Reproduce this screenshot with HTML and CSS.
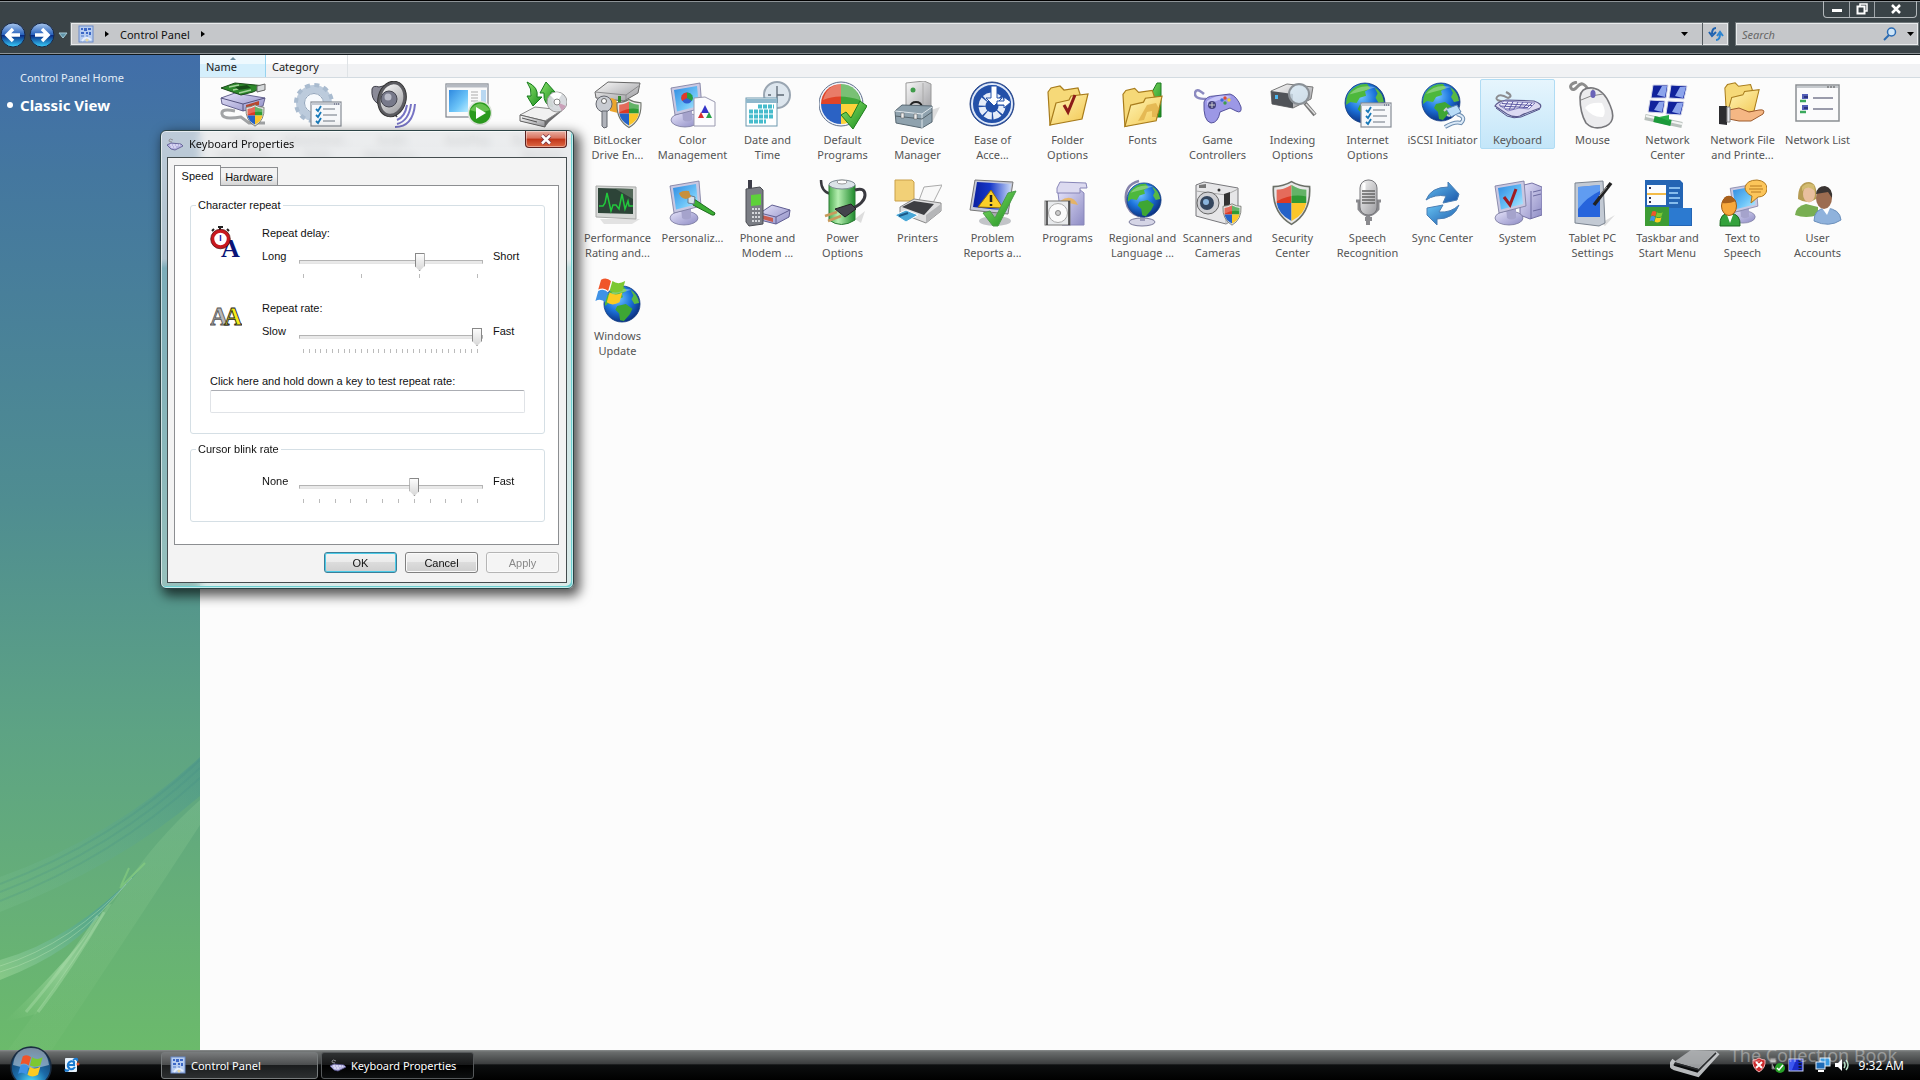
FILE: index.html
```html
<!DOCTYPE html>
<html lang="en">
<head>
<meta charset="utf-8">
<title>Control Panel</title>
<link rel="stylesheet" href="styles.css">
</head>
<body>
<svg class="defs" width="0" height="0" aria-hidden="true">
  <defs>
    <linearGradient id="silver" x1="0" y1="0" x2="1" y2="1"><stop offset="0" stop-color="#fafafa"/><stop offset="1" stop-color="#9a9a9e"/></linearGradient>
    <linearGradient id="screen" x1="0" y1="0" x2="1" y2="1"><stop offset="0" stop-color="#2f8ae0"/><stop offset=".6" stop-color="#6cc4f8"/><stop offset="1" stop-color="#b9ecff"/></linearGradient>
    <linearGradient id="navy" x1="0" y1="0" x2="1" y2="0"><stop offset="0" stop-color="#0a1fa0"/><stop offset=".45" stop-color="#1638c8"/><stop offset="1" stop-color="#c8d8f8"/></linearGradient>
    <linearGradient id="gold" x1="0" y1="0" x2="1" y2="1"><stop offset="0" stop-color="#fff6b8"/><stop offset="1" stop-color="#f2c650"/></linearGradient>
    <linearGradient id="lilac" x1="0" y1="0" x2="1" y2="1"><stop offset="0" stop-color="#e6e4fa"/><stop offset="1" stop-color="#8d8bc4"/></linearGradient>
    <linearGradient id="green" x1="0" y1="0" x2="1" y2="1"><stop offset="0" stop-color="#8be36b"/><stop offset="1" stop-color="#168a1c"/></linearGradient>
    <linearGradient id="sync" x1="0" y1="0" x2="1" y2="1"><stop offset="0" stop-color="#66c2f2"/><stop offset="1" stop-color="#1a55a8"/></linearGradient>
    <linearGradient id="cell" x1="0" y1="0" x2="1" y2="0"><stop offset="0" stop-color="#4fae52"/><stop offset=".35" stop-color="#b5eeb0"/><stop offset="1" stop-color="#1f8a2c"/></linearGradient>
    <radialGradient id="sea" cx=".4" cy=".35" r=".7"><stop offset="0" stop-color="#6fc2ff"/><stop offset=".5" stop-color="#1c74dc"/><stop offset="1" stop-color="#0a2a78"/></radialGradient>
    <radialGradient id="orb" cx=".5" cy=".9" r=".9"><stop offset="0" stop-color="#4fe0ff"/><stop offset=".45" stop-color="#1b6aa8"/><stop offset="1" stop-color="#12304e"/></radialGradient>
    <linearGradient id="nav" x1="0" y1="0" x2="0" y2="1"><stop offset="0" stop-color="#a9c8ee"/><stop offset=".48" stop-color="#2a63bd"/><stop offset=".52" stop-color="#082c86"/><stop offset="1" stop-color="#3ad2ff"/></linearGradient>
  </defs>

  <symbol id="shield" viewBox="0 0 24 28">
    <path d="M12 1Q17 4 23 4Q24 20 12 27Q0 20 1 4Q7 4 12 1Z" fill="#e8e8e8" stroke="#6c7068" stroke-width="1"/>
    <path d="M12 3Q7 6 3 6V14H12Z" fill="#dc3a24"/><path d="M12 3Q17 6 21 6V14H12Z" fill="#2f9a34"/>
    <path d="M3 14H12V25Q4 21 3 14Z" fill="#2462c8"/><path d="M21 14H12V25Q20 21 21 14Z" fill="#fbc62a"/>
    <path d="M3 6Q7 6 12 3Q17 6 21 6V10Q12 8 3 13Z" fill="#fff" opacity=".25"/>
  </symbol>
  <symbol id="globe" viewBox="0 0 40 40">
    <circle cx="20" cy="20" r="19" fill="url(#sea)" stroke="#0f3a80" stroke-width=".8"/>
    <path d="M5 10Q12 1 22 2L25 6L20 9L21 13L15 15L12 20L6 19L2 22Q2 14 5 10Z" fill="#4db83c"/>
    <path d="M15 22L24 20L31 25L28 31L22 38L18 37L17 30L13 26Z" fill="#3ea634"/>
    <path d="M29 5Q37 10 38 19L33 20L30 15L32 11Z" fill="#58b944"/>
    <path d="M5 12Q14 1 30 5Q20 8 5 12Z" fill="#fff" opacity=".3"/>
  </symbol>
  <symbol id="monitor" viewBox="0 0 34 46">
    <ellipse cx="15" cy="38" rx="14" ry="7" fill="url(#lilac)" stroke="#77779c" stroke-width=".8"/>
    <path d="M12 27L22 25L22 38Q17 41 13 38Z" fill="#a5a3cc"/>
    <path d="M1 6L30 1L32 26L5 33Z" fill="#c9c8e2" stroke="#77779c" stroke-width=".8"/>
    <path d="M4 8L27 4L29 24L7 29.500Z" fill="url(#screen)"/>
  </symbol>
  <symbol id="folder" viewBox="0 0 44 42">
    <path d="M2 7L5 3L14 1L18 5L32 3L34 9V30L4 40Z" fill="#f6d978" stroke="#a87c1c" stroke-width="1.200"/>
    <path d="M10 18L23 15L25 11L42 9L36 34L4 40Z" fill="url(#gold)" stroke="#a87c1c" stroke-width="1.200"/>
  </symbol>
  <symbol id="checklist" viewBox="0 0 32 26">
    <rect x="1" y="1" width="30" height="24" fill="#f7f8fa" stroke="#868c94" stroke-width="1.200"/>
    <path d="M1 3H31" stroke="#c3c8d0" stroke-width="2"/><path d="M24 3H29" stroke="#446" stroke-dasharray="1 1"/>
    <path d="M13 8H25M13 14H27M13 20H25" stroke="#6d7480" stroke-width="1.200"/>
    <path d="M6 8L8 10L11 5M6 14L8 16L11 11M6 20L8 22L11 17" fill="none" stroke="#1879b8" stroke-width="1.800"/>
  </symbol>
  <symbol id="keyb" viewBox="0 0 48 30">
    <path d="M13 11Q0 10 3 6T14 7Q20 5 12 1" fill="none" stroke="#8c8c90" stroke-width="2"/>
    <path d="M1 15Q3 11 12 9L40 10Q49 13 46 17L38 20Q32 22 26 25Q20 27 13 23Z" fill="#dcdaf2" stroke="#5c5a8e" stroke-width="1.200"/>
    <path d="M5 14L10 10L41 12L35 18L25 17L14 20Z" fill="#f0effc" stroke="#6f6bb0" stroke-width=".8"/>
    <path d="M8 12.500L38 14.500M6 15L33 16.500M11 18L20 18M14 10.500L10 17M19 10.500L15 19M24 11L20 18M29 11L25 17M34 12L29 17M38 12L33 17" stroke="#5b57a2" stroke-width="1"/>
    <path d="M2 17L13 25Q20 28 27 26L39 21L46 18" fill="none" stroke="#53518a" stroke-width="1"/>
  </symbol>
  <symbol id="keyb-small" viewBox="0 0 16 16">
    <path d="M5 6Q1 6 2 4T6 4" fill="none" stroke="#909096"/>
    <path d="M0 9L4 7L14 8L16 10L12 12L8 14L4 13Z" fill="#b9b6e2" stroke="#55528c" stroke-width=".8"/>
    <path d="M3 9L13 9M4 11L10 11" stroke="#f2f1ff" stroke-dasharray="2 1"/>
  </symbol>
  <symbol id="flag" viewBox="0 0 24 22">
    <path d="M5 3Q9 1 12 4L10 11Q7 8 3 10Z" fill="#f0552a"/><path d="M13 4Q17 7 22 4L20 11Q15 13 11 11Z" fill="#7cc832"/>
    <path d="M3 11Q7 9 10 12L8 19Q5 16 1 18Z" fill="#3f92e6"/><path d="M11 12Q15 15 20 12L18 19Q13 22 9 19Z" fill="#fccb22"/>
  </symbol>
  <symbol id="cpanel" viewBox="0 0 16 18">
    <rect x="1" y="1" width="14" height="16" fill="#b7cdf0" stroke="#6b8ac8"/>
    <path d="M3 3H5V5H3ZM6 3H9V6H6ZM10 3H13V5H10ZM3 7H6V9H3ZM8 7H10V9H8ZM11 7H13V10H11Z" fill="#3c68c6"/><path d="M3 11H6M8 11H10" stroke="#4f78cc"/>
    <path d="M4 16Q8 10 13 15" stroke="#e4eeff" stroke-width="2" fill="none"/><circle cx="9" cy="15" r="1.500" fill="#e7d7a0"/>
  </symbol>

  <symbol id="i-hardware" viewBox="0 0 48 48">
    <path d="M16 30Q2 27 3 33T22 36L30 42H46" fill="none" stroke="#a2a4a6" stroke-width="3"/>
    <path d="M2 17L16 12L46 17L44 25L24 30L3 23Z" fill="url(#lilac)" stroke="#666490"/>
    <path d="M2 17L24 23L46 17M24 23V30" fill="none" stroke="#55537e"/><path d="M27 24L40 20V24L27 28Z" fill="#b8462e"/>
    <path d="M2 7L16 2L46 5L34 11L22 14Z" fill="#2e8a2c" stroke="#1b4a1a"/><path d="M10 6L20 4M14 9L24 7M20 12L32 9" stroke="#a6d49c" stroke-width="1.500"/><path d="M16 6L28 4L32 7L20 9Z" fill="#174c18"/><path d="M38 5L46 3V9L38 11Z" fill="#d5d8da" stroke="#666"/>
    <use href="#shield" x="26" y="23" width="20" height="23"/>
  </symbol>
  <symbol id="i-tools" viewBox="0 0 48 48">
    <circle cx="20" cy="22" r="14" fill="none" stroke="#bccbdc" stroke-width="8"/>
    <circle cx="20" cy="22" r="18" fill="none" stroke="#a9bbcf" stroke-width="4" stroke-dasharray="5 4.400"/>
    <circle cx="20" cy="22" r="9.500" fill="#f7fafd" stroke="#8fa3ba"/>
    <use href="#checklist" x="16" y="20" width="32" height="26"/>
  </symbol>
  <symbol id="i-audio" viewBox="0 0 48 48">
    <path d="M3 8Q4 4 10 6L18 4L28 36L14 26L8 22Q2 18 3 8Z" fill="#8b8b98" stroke="#3d3d48"/>
    <ellipse cx="23" cy="18" rx="14" ry="18" transform="rotate(15 23 18)" fill="#5b5b60" stroke="#333"/>
    <ellipse cx="23" cy="18" rx="11" ry="15" transform="rotate(15 23 18)" fill="url(#silver)"/>
    <circle cx="20" cy="18" r="8" fill="#77798a" stroke="#44454f"/><circle cx="19" cy="16" r="3.500" fill="#b9bbc8"/>
    <path d="M28 39Q36 36 38 24M28 43Q40 40 42 23M26 46Q44 46 46 23" fill="none" stroke="#7673c4" stroke-width="2"/>
  </symbol>
  <symbol id="i-autoplay" viewBox="0 0 48 48">
    <rect x="2" y="3" width="42" height="33" fill="#fafafa" stroke="#7d838c" stroke-width="1.200"/>
    <path d="M2 5H44" stroke="#b5bac2" stroke-width="3"/><rect x="5" y="9" width="19" height="22" fill="url(#screen)"/><path d="M27 11H34M27 14H34M27 17H34M27 20H34" stroke="#aaa"/><rect x="37" y="9" width="5" height="20" fill="#b9d8f2"/>
    <circle cx="36" cy="32" r="11.500" fill="#2b9a1e" stroke="#e0e6de" stroke-width="1.500"/><path d="M26 29Q36 16 46 29Q36 33 26 29Z" fill="#8ddc70" opacity=".6"/><path d="M32 26L42 32L32 38Z" fill="#fff"/>
  </symbol>
  <symbol id="i-backup" viewBox="0 0 48 48">
    <path d="M1 36L16 27L43 30L30 41L26 46L1 40Z" fill="#6e6e70"/><path d="M1 34L16 26L43 29L26 40Z" fill="#f1f1f1" stroke="#888"/><path d="M1 34L26 40V46L1 40Z" fill="url(#silver)" stroke="#666"/><path d="M3 37L18 41" stroke="#555"/>
    <path d="M8 1Q20 6 18 16H23L14 25L8 15H12Q13 8 8 1Z" fill="url(#green)" stroke="#167a1c"/>
    <path d="M27 1L36 11H32Q31 20 34 26Q24 24 25 12L21 12Z" fill="url(#green)" stroke="#167a1c"/>
    <circle cx="38" cy="21" r="10" fill="#d7dade" stroke="#999" opacity=".95"/><path d="M38 21L31 14Q37 9 43 13Z" fill="#fff"/><path d="M38 21L47 25L43 30Z" fill="#c9a0b8"/><circle cx="38" cy="21" r="3" fill="#fff" stroke="#888"/>
  </symbol>
  <symbol id="i-bitlocker" viewBox="0 0 48 48">
    <path d="M1 11L14 1L46 2L44 12L30 20L2 17Z" fill="url(#silver)" stroke="#666"/><path d="M1 11L32 14L46 4M32 14V20" fill="none" stroke="#8a8a8c"/><path d="M24 15H27V21H24Z" fill="#2e8a30"/>
    <path d="M14 17Q24 16 24 26V32L16 30Z" fill="#eba52c"/><circle cx="10" cy="23" r="8" fill="#c9ccd2" stroke="#63666e"/><circle cx="10" cy="20" r="2.500" fill="#fff" stroke="#666"/>
    <path d="M8 30H13V46L10 47L8 45Z" fill="#b0b3ba" stroke="#63666e"/>
    <use href="#shield" x="22" y="17" width="26" height="31"/>
  </symbol>
  <symbol id="i-color" viewBox="0 0 48 48">
    <use href="#monitor" x="1" y="1" width="34" height="46"/>
    <circle cx="18" cy="17" r="5.500" fill="#3160d0"/><path d="M18 17V11.500A5.500 5.500 0 0 1 23 20Z" fill="#28a040"/><path d="M18 17V11.500A5.500 5.500 0 0 0 13 20Z" fill="#e0382a"/>
    <path d="M25 17L36 16L46 21V45H25Z" fill="#fcfcfe" stroke="#9a9ab0"/><path d="M36 24L40 32H32Z" fill="#3434c8"/><path d="M32 31L35 37H29Z" fill="#d83030"/><path d="M40 31L43 37H37Z" fill="#28a048"/>
  </symbol>
  <symbol id="i-date" viewBox="0 0 48 48">
    <circle cx="33" cy="14" r="13" fill="#dde6ee" stroke="#9aa6b2" stroke-width="2"/><path d="M33 5V14H40M33 14V22M24 14H27" stroke="#5c6874" fill="none" stroke-width="1.300"/>
    <rect x="2" y="17" width="31" height="28" fill="#fff" stroke="#6c98ae"/><path d="M2 20H33" stroke="#8fb8cc" stroke-width="4"/>
    <path d="M14 25.500H30M5 30.500H30M5 35.500H30M5 40.500H22" stroke="#46bccc" stroke-width="4" stroke-dasharray="4 1"/>
  </symbol>
  <symbol id="i-default" viewBox="0 0 48 48">
    <circle cx="22" cy="23" r="22" fill="#f0f3f8" stroke="#60708c"/><path d="M22 23V3A20 20 0 0 0 2 23Z" fill="#e04428"/><path d="M22 23V3A20 20 0 0 1 42 23Z" fill="#3fa53a"/><path d="M22 23H2A20 20 0 0 0 22 43Z" fill="#2b62c4"/><path d="M22 23H42A20 20 0 0 1 22 43Z" fill="#fcd23a"/>
    <path d="M4 19Q8 4 22 3Q38 4 41 19Q20 12 4 19Z" fill="#fff" opacity=".3"/>
    <path d="M22 34L27 31L32 37L41 20L48 25L34 48Z" fill="url(#green)" stroke="#1e7d1c"/>
  </symbol>
  <symbol id="i-device" viewBox="0 0 48 48">
    <path d="M34 30L46 26L38 42Z" fill="#ddd"/><path d="M12 2L30 0L37 3V34H12Z" fill="url(#silver)" stroke="#999"/><path d="M29 2V34" stroke="#aaa"/><circle cx="19" cy="9" r="2.500" fill="#3f9c4a"/>
    <path d="M16 26Q17 21 22 21T28 26" fill="none" stroke="#222" stroke-width="2"/><path d="M1 30L8 24L38 25V41L28 47L2 42Z" fill="#8fa2ae" stroke="#586872"/><path d="M1 30L28 33L38 26M28 33V47" fill="none" stroke="#dfe7ec"/><path d="M1 35L28 38L38 31" fill="none" stroke="#56646c"/><path d="M7 32H10V37H7ZM20 33H23V38H20Z" fill="#eee" stroke="#555" stroke-width=".5"/>
  </symbol>
  <symbol id="i-ease" viewBox="0 0 48 48">
    <circle cx="23" cy="23" r="22" fill="#2350a8" stroke="#2b4684"/><circle cx="23" cy="23" r="20" fill="none" stroke="#dfe8f8" stroke-width="2"/>
    <circle cx="23" cy="25" r="10" fill="none" stroke="#e6edf9" stroke-width="7" stroke-dasharray="6.500 1.400"/><path d="M22 5H28V17H33L25 25L17 17H22Z" fill="#fff" stroke="#2350a8"/><path d="M28 20H35V16L42 21L35 27V24H28Z" fill="#fff" stroke="#2350a8"/>
  </symbol>
  <symbol id="i-folderopt" viewBox="0 0 48 48"><use href="#folder" x="2" y="4" width="44" height="42"/><path d="M20 24L24 31L31 14" fill="none" stroke="#8c1c18" stroke-width="3"/></symbol>
  <symbol id="i-fonts" viewBox="0 0 48 48"><path d="M27 22L38 2L42 2V36H28Z" fill="url(#green)" stroke="#1d7a20"/><use href="#folder" x="2" y="6" width="43" height="42"/><path d="M19 40L28 24L37 22L40 28L37 36L33 36V30L28 31L25 39Z" fill="#e0b04a" opacity=".8"/></symbol>
  <symbol id="i-game" viewBox="0 0 48 48">
    <path d="M12 18Q0 18 1 12T10 13" fill="none" stroke="#8c8ac0" stroke-width="2.500"/>
    <path d="M10 21Q12 15 20 15L36 13Q43 15 47 26Q48 33 42 30L36 27L26 31Q24 42 17 42Q9 40 10 21Z" fill="#9c98e6" stroke="#55529c"/>
    <path d="M13 20Q24 12 38 16Q24 18 13 24Z" fill="#d9d7ff" opacity=".7"/><circle cx="18" cy="24" r="4" fill="#45437c"/><path d="M15 24H21M18 21V27" stroke="#ccc"/><circle cx="31" cy="17" r="1.700" fill="#e04a30"/><circle cx="35" cy="19" r="1.700" fill="#f4ce30"/><circle cx="31" cy="22" r="1.700" fill="#3ca048"/><circle cx="28" cy="19" r="1.700" fill="#3a6cd8"/>
  </symbol>
  <symbol id="i-index" viewBox="0 0 48 48">
    <path d="M2 10L18 3L44 6L42 18L24 27L3 23Z" fill="url(#silver)" stroke="#777"/><path d="M2 10L24 13V27L3 23Z" fill="#505358"/><rect x="6" y="14" width="3" height="4" fill="#4db8f0"/>
    <path d="M36 22L46 34" stroke="#777" stroke-width="4"/><path d="M37 23L46 33" stroke="#ddd" stroke-width="1.500"/><circle cx="30" cy="13" r="10" fill="#d8eaf6" fill-opacity=".8" stroke="#8a9096" stroke-width="2"/>
  </symbol>
  <symbol id="i-internet" viewBox="0 0 48 48"><use href="#globe" x="0" y="0" width="42" height="44"/><use href="#checklist" x="16" y="21" width="32" height="26"/></symbol>
  <symbol id="i-iscsi" viewBox="0 0 48 48"><use href="#globe" x="2" y="0" width="40" height="42"/><path d="M38 33Q48 36 42 42Q36 40 26 46" fill="none" stroke="#6c8cae" stroke-width="4"/><path d="M38 33Q48 36 42 42Q36 40 26 46" fill="none" stroke="#dceaf8" stroke-width="2"/><path d="M27 28L38 24L42 31L32 36Z" fill="#b8dcf8" stroke="#5a82b0"/><path d="M25 30L28 27M28 34L31 35" stroke="#ccc" stroke-width="2"/></symbol>
  <symbol id="i-keyboard" viewBox="0 0 48 48"><use href="#keyb" x="0" y="10" width="48" height="30"/></symbol>
  <symbol id="i-mouse" viewBox="0 0 48 48">
    <path d="M20 10Q14 -1 9 5T2 7T8 1" fill="none" stroke="#8d8d8d" stroke-width="3"/>
    <path d="M11 16Q12 6 24 7Q35 9 41 24Q48 40 37 45Q25 50 17 42Q11 32 11 16Z" fill="#ececee" stroke="#77777b" stroke-width="1.600"/>
    <path d="M12 19Q21 14 34 13M24 8V14" stroke="#888" fill="none"/><ellipse cx="24" cy="13" rx="2.600" ry="4" fill="#6a63b8"/><path d="M16 27Q20 21 33 22Q38 31 34 36Q24 37 16 27Z" fill="#fff"/>
  </symbol>
  <symbol id="i-netcenter" viewBox="0 0 48 48">
    <path d="M9 4L24 4L22 17L7 17ZM27 4L43 5L40 18L25 17ZM6 19L21 20L19 32L4 31ZM24 20L40 21L37 34L22 33Z" fill="#10229c" stroke="#d5d8ea"/>
    <path d="M18 5H23L21 16L13 14ZM36 6L42 6L39 17L31 15ZM15 21H20L18 31L10 29ZM33 22H39L36 33L28 31Z" fill="#8ca4ec"/>
    <path d="M1 36L38 44" stroke="#b8c0bc" stroke-width="6"/><path d="M2 35L38 43" stroke="#f4f6f4" stroke-width="2"/><path d="M10 38L27 42" stroke="#1b9a3a" stroke-width="6"/><path d="M15 36L25 34V40Z" fill="#28b048"/>
  </symbol>
  <symbol id="i-netfile" viewBox="0 0 48 48"><use href="#folder" x="1" y="1" width="44" height="36"/><path d="M10 29L20 27L30 31L40 29Q47 28 44 33L32 40L20 40L10 38Z" fill="#f5b784" stroke="#9c5a2c"/><path d="M0 25H8V44L0 43Z" fill="#2c2c30"/><path d="M8 26H11V41H8Z" fill="#e5e5ea" stroke="#888"/></symbol>
  <symbol id="i-netlist" viewBox="0 0 48 48">
    <rect x="2" y="4" width="43" height="36" fill="#fbfbfc" stroke="#8a8e92" stroke-width="1.500"/><path d="M3 6H44" stroke="#c6cace" stroke-width="2"/><path d="M33 6H42" stroke="#555" stroke-dasharray="2 1"/>
    <path d="M19 17H39M19 28H39" stroke="#7b7c90" stroke-width="1.600"/><path d="M8 13H14V18H8ZM8 24H14V29H8Z" fill="#5560b8"/><path d="M6 20H12M6 31H12" stroke="#3aa85c" stroke-width="2.500"/><path d="M10 16H14M10 27H14" stroke="#2c3580" stroke-width="2"/>
  </symbol>
  <symbol id="i-perf" viewBox="0 0 48 48">
    <path d="M6 40H46L38 45H10Z" fill="#e2e2e2"/><path d="M2 7L42 8V40L2 38Z" fill="#d6d8d6" stroke="#a9aaa9"/><path d="M4 9L39 10V35L4 34Z" fill="#2d4438"/><path d="M20 9L39 10V20Z" fill="#6d8070" opacity=".6"/><path d="M5 27H9L11 24L13 14L17 32L19 26H22L25 30L28 15L31 30L34 22L35 27H39" fill="none" stroke="#22c83c" stroke-width="1.500"/>
  </symbol>
  <symbol id="i-personal" viewBox="0 0 48 48"><use href="#monitor" x="0" y="1" width="34" height="46"/><path d="M25 20L46 34Q46 37 43 36L24 26Z" fill="#3cae34" stroke="#1c6c1c"/><path d="M19 16L26 18L25 25L19 24Z" fill="#d8e2ec" stroke="#68788a"/><path d="M10 14Q14 11 20 12L22 18L17 20Q11 19 10 14Z" fill="#c8903c"/></symbol>
  <symbol id="i-phone" viewBox="0 0 48 48">
    <path d="M16 34L28 26L46 31L45 38L32 45L16 41Z" fill="url(#lilac)" stroke="#605e92"/><path d="M16 34L32 38L46 31M32 38V45" stroke="#605e92" fill="none"/><path d="M18 36L29 39V43L18 40Z" fill="#c85c50"/>
    <path d="M4 1H8V12H4Z" fill="#3d3d48"/><path d="M2 10L16 8L19 11V45L5 47L2 43Z" fill="#7a7d84" stroke="#4a4c52"/><path d="M7 16L17 15V26L7 27Z" fill="#5ed03a"/><path d="M8 30H17M8 34H17M8 38H17M8 42H17" stroke="#d5d7db" stroke-width="2" stroke-dasharray="2 1"/>
  </symbol>
  <symbol id="i-power" viewBox="0 0 48 48">
    <path d="M36 40L46 32L42 44Z" fill="#ddd"/><path d="M2 1Q2 13 12 15" fill="none" stroke="#39393f" stroke-width="2.500"/><path d="M10 6V41Q22 50 36 41V6Z" fill="url(#cell)" stroke="#2a7a34"/><ellipse cx="23" cy="5.500" rx="13" ry="4.500" fill="#dbe3e8" stroke="#7b8a92"/><ellipse cx="23" cy="3" rx="5" ry="2" fill="#fff" stroke="#999"/>
    <path d="M32 30Q46 24 46 16T36 11" fill="none" stroke="#39393f" stroke-width="3"/><path d="M16 30L32 25L37 30L26 38Z" fill="#43434c" stroke="#222"/><path d="M18 33L6 37M22 37L9 42" stroke="#c89a5c" stroke-width="2.500"/>
  </symbol>
  <symbol id="i-print" viewBox="0 0 48 48">
    <path d="M1 1H18L20 3V22H1Z" fill="#f2d077" stroke="#c9a04a"/><path d="M30 8L48 6L38 26L24 24Z" fill="#f8f8f8" stroke="#aaa"/>
    <path d="M6 28L20 20L47 24V32L32 44L6 34Z" fill="#dededf" stroke="#888"/><path d="M8 28L20 22L40 25L30 36Z" fill="#3d3e42"/><path d="M32 36L47 25V32L32 44Z" fill="#b5b6b8"/><path d="M1 36L12 31L24 36L12 43Z" fill="#4aa8d8" stroke="#fff"/><path d="M5 37L14 34" stroke="#1c5a88" stroke-width="2"/>
  </symbol>
  <symbol id="i-problem" viewBox="0 0 48 48">
    <ellipse cx="26" cy="42" rx="16" ry="5" fill="#c2c4c8"/><path d="M22 32H32V42H22Z" fill="#a8aab0"/><path d="M6 1L44 3L39 35L1 31Z" fill="#c7cad8" stroke="#777"/><path d="M8 3L42 5L38 32L4 28Z" fill="url(#navy)"/><path d="M22 11L34 29L9 28Z" fill="#fbcf28" stroke="#8c6a10"/><path d="M22 16V23M22 25V27" stroke="#222" stroke-width="2.500"/>
    <path d="M14 34L21 32L26 39L39 14L47 12L29 47H24Z" fill="url(#green)" stroke="#4a9c48"/>
  </symbol>
  <symbol id="i-programs" viewBox="0 0 48 48">
    <path d="M14 14L35 10L40 14V46H18Z" fill="url(#lilac)" stroke="#8886b8"/><path d="M16 3L42 4L43 9H36V14H13V9Z" fill="#dcdaf0" stroke="#8886b8"/><path d="M16 22Q28 14 34 26Z" fill="#efb24a" opacity=".8"/>
    <rect x="1" y="22" width="25" height="24" fill="#e8eaec" stroke="#777"/><path d="M3 22V46M25 22V46" stroke="#333" stroke-width="1.500"/><circle cx="14" cy="34" r="9.500" fill="#fbfbfb" stroke="#aaa"/><circle cx="14" cy="34" r="2.500" fill="#ccc" stroke="#888"/>
  </symbol>
  <symbol id="i-region" viewBox="0 0 48 48"><ellipse cx="23" cy="43" rx="13" ry="4" fill="#d5d5e6" stroke="#7c7c9c"/><path d="M21 36H26V42H21Z" fill="#9a9ab8"/><path d="M20 2Q5 6 7 22Q9 34 20 37" fill="none" stroke="#8684ac" stroke-width="2.500"/><use href="#globe" x="7" y="3" width="36" height="36"/></symbol>
  <symbol id="i-scanner" viewBox="0 0 48 48">
    <path d="M2 6L10 3L44 9V38L32 45L2 37Z" fill="#e6e6e8" stroke="#77777b"/><path d="M2 12L32 16L44 10M32 16V45" fill="none" stroke="#aaa"/><path d="M30 15L36 13V26L30 28Z" fill="#333"/><circle cx="14" cy="24" r="11" fill="#cfd0d4" stroke="#666"/><circle cx="13" cy="24" r="7" fill="#34465e"/><circle cx="12" cy="23" r="3" fill="#8ab4dc"/><path d="M5 6L12 5V9H5Z" fill="#777"/><circle cx="25" cy="11" r="1.500" fill="#333"/>
    <use href="#shield" x="28" y="24" width="20" height="23"/>
  </symbol>
  <symbol id="i-security" viewBox="0 0 48 48"><use href="#shield" x="2" y="1" width="41" height="46"/></symbol>
  <symbol id="i-speech" viewBox="0 0 48 48">
    <path d="M12 22H15V30Q24 42 34 30V22H37" fill="none" stroke="#8a8a8e" stroke-width="3"/><path d="M24 36V46M21 40H28" stroke="#8a8a8e" stroke-width="4"/><rect x="16" y="1" width="17" height="35" rx="8" fill="url(#silver)" stroke="#77777b"/><path d="M18 12H31M18 15H31M18 18H31M18 21H31M18 24H31" stroke="#666" stroke-width="1.300"/><path d="M20 4V11" stroke="#fff" stroke-width="3"/>
  </symbol>
  <symbol id="i-sync" viewBox="0 0 48 48"><path d="M7 21Q12 8 29 8V3L40 15L38 21L24 24L27 17Q16 15 7 21Z" fill="url(#sync)" stroke="#4b7eb4"/><path d="M40 26Q35 40 18 40V46L8 36L8 29L24 26L20 33Q32 34 40 26Z" fill="url(#sync)" stroke="#4b7eb4"/></symbol>
  <symbol id="i-system" viewBox="0 0 48 48"><path d="M26 7L38 4L48 8V36L36 40L26 36Z" fill="url(#lilac)" stroke="#7673a6"/><path d="M37 12V40M39 13L47 11M39 17L47 15M39 32L47 30" stroke="#6c6aa0" fill="none"/><use href="#monitor" x="0" y="1" width="34" height="46"/><path d="M10 18L16 26L22 10" fill="none" stroke="#a01c20" stroke-width="3"/></symbol>
  <symbol id="i-tablet" viewBox="0 0 48 48"><path d="M32 44L46 36L36 47Z" fill="#ddd"/><path d="M6 4L34 2L36 44L30 47L6 44Z" fill="#c3cad4" stroke="#7b8490"/><path d="M9 8L31 6V38L9 38Z" fill="#2664dc"/><path d="M9 8L31 6V12Q18 18 9 30Z" fill="#79b4fa" opacity=".7"/><path d="M25 26L42 4" stroke="#222" stroke-width="3.500"/><path d="M30 17L38 8" stroke="#999" stroke-width="1"/></symbol>
  <symbol id="i-taskbar" viewBox="0 0 48 48"><path d="M1 1H36L39 4V29H48V47H1Z" fill="#2465b4"/><rect x="3" y="6" width="19" height="20" fill="#fafcff"/><path d="M3 15H22" stroke="#f2bb4a" stroke-width="2"/><path d="M5 9H7M5 19H7M5 23H7" stroke="#335" stroke-width="2"/><path d="M25 9H36M25 14H34M25 19H36M25 24H34" stroke="#86bcec" stroke-width="2"/><path d="M1 28H25V47H1Z" fill="#3d9c34"/><path d="M25 29H47V46H25Z" fill="#2c7ad0"/><use href="#flag" x="5" y="30" width="15" height="15"/></symbol>
  <symbol id="i-text" viewBox="0 0 48 48"><use href="#monitor" x="10" y="4" width="31" height="41"/><path d="M26 8Q28 1 38 1Q48 2 48 10Q47 18 39 18L32 24L33 17Q26 14 26 8Z" fill="#fcc55a" stroke="#b0781c"/><path d="M31 7H43M30 10H44M32 13H42" stroke="#b87a20"/><path d="M1 47Q0 34 11 34Q22 35 21 47Z" fill="#34a23c" stroke="#1b6820"/><path d="M8 36L11 44L14 36Z" fill="#fff"/><ellipse cx="10" cy="27" rx="7.500" ry="9.500" fill="#f7a83c" stroke="#a05c14"/><path d="M3 24Q5 15 12 17L17 22Q10 25 3 24Z" fill="#a8601c"/></symbol>
  <symbol id="i-users" viewBox="0 0 48 48"><path d="M1 36Q2 27 12 25L24 28V36Q12 40 1 36Z" fill="#78ae52"/><path d="M4 20Q4 3 15 3Q24 4 22 20Q14 26 4 20Z" fill="#b69c54"/><ellipse cx="15" cy="15" rx="6" ry="8.500" fill="#e8bf9e"/><path d="M8 12Q14 5 21 12L20 6Q13 2 8 8Z" fill="#d2bb70"/><path d="M20 42Q20 30 32 29Q46 30 47 41Q35 49 20 42Z" fill="#8fb2dc" stroke="#6b90bc"/><path d="M28 29L33 36L36 29Z" fill="#fff"/><ellipse cx="30" cy="19" rx="8" ry="11" fill="#9c6c50"/><path d="M22 15Q23 7 31 7Q39 9 38 19L34 13Z" fill="#3a3432"/></symbol>
  <symbol id="i-update" viewBox="0 0 48 48"><use href="#globe" x="9" y="8" width="38" height="38"/><use href="#flag" x="0" y="-3" width="34" height="34"/></symbol>
</svg>

<div class="desktop">
  <header class="titlebar">
    <div class="win-buttons">
      <button aria-label="Minimize"><svg width="12" height="10"><rect x="1" y="5" width="10" height="3" fill="#fff"/></svg></button>
      <button aria-label="Restore"><svg width="12" height="12"><path d="M4 3V1H11V8H9" fill="none" stroke="#fff" stroke-width="1.500"/><rect x="1.500" y="3.500" width="7" height="7" fill="none" stroke="#fff" stroke-width="2"/></svg></button>
      <button class="wide" aria-label="Close"><svg width="12" height="10"><path d="M2 1L10 9M10 1L2 9" stroke="#fff" stroke-width="2.500"/></svg></button>
    </div>
  </header>
  <div class="navbar">
    <div class="nav-buttons">
      <button class="nav" aria-label="Back"><svg width="26" height="26" viewBox="0 0 26 26"><circle cx="13" cy="13" r="12" fill="url(#nav)" stroke="#1a2a48"/><path d="M20 13H9M13 7L7 13L13 19" fill="none" stroke="#fff" stroke-width="3.500"/></svg></button>
      <button class="nav" aria-label="Forward"><svg width="26" height="26" viewBox="0 0 26 26"><circle cx="13" cy="13" r="12" fill="url(#nav)" stroke="#1a2a48"/><path d="M6 13H17M13 7L19 13L13 19" fill="none" stroke="#fff" stroke-width="3.500"/></svg></button>
      <button class="nav small" aria-label="Recent pages"><svg width="10" height="7"><path d="M1 1H9L5 6Z" fill="#5f93a8" stroke="#a5cbd8"/></svg></button>
    </div>
    <div class="address">
      <svg width="16" height="18"><use href="#cpanel"/></svg>
      <svg class="crumb" width="4" height="6"><path d="M0 0L4 3L0 6Z"/></svg>
      <a href="#">Control Panel</a>
      <svg class="crumb" width="4" height="6"><path d="M0 0L4 3L0 6Z"/></svg>
      <button class="drop" aria-label="Previous locations"><svg width="7" height="4"><path d="M0 0H7L3.500 4Z"/></svg></button>
      <button class="refresh" aria-label="Refresh"><svg width="16" height="14" viewBox="0 0 16 14"><path d="M8 1Q4 1 4 7M1 5L4 9L8 5" fill="none" stroke="#1e62b0" stroke-width="2"/><path d="M8 13Q12 13 12 7M9 9L12 5L15 9" fill="none" stroke="#2c84d0" stroke-width="2"/></svg></button>
    </div>
    <div class="search">
      <input type="text" placeholder="Search" aria-label="Search">
      <svg width="14" height="14" viewBox="0 0 14 14"><circle cx="8.500" cy="5" r="4" fill="#cfe6f8" stroke="#2c6cb4" stroke-width="1.500"/><path d="M6 8L1 13" stroke="#2c6cb4" stroke-width="2"/></svg>
      <svg width="7" height="4"><path d="M0 0H7L3.500 4Z"/></svg>
    </div>
  </div>

  <div class="body">
    <nav class="sidebar">
      <svg class="ribbons" viewBox="0 0 200 350" aria-hidden="true">
        <defs>
          <linearGradient id="r1" x1="1" y1="0" x2="0" y2="1"><stop offset="0" stop-color="#3c8a94" stop-opacity=".35"/><stop offset="1" stop-color="#7fc490" stop-opacity=".25"/></linearGradient>
          <linearGradient id="r2" x1="1" y1="0" x2="0" y2="1"><stop offset="0" stop-color="#3f9296" stop-opacity=".9"/><stop offset=".45" stop-color="#55a896" stop-opacity=".6"/><stop offset="1" stop-color="#a5dc9c" stop-opacity=".5"/></linearGradient>
          <linearGradient id="r3" x1="1" y1="0" x2="0" y2="1"><stop offset="0" stop-color="#9ad49c" stop-opacity=".3"/><stop offset=".5" stop-color="#a8dca8" stop-opacity=".6"/><stop offset="1" stop-color="#86cc80" stop-opacity="0"/></linearGradient>
          <linearGradient id="r4" x1="0" y1="0" x2="0" y2="1"><stop offset="0" stop-color="#8ccb96" stop-opacity=".3"/><stop offset="1" stop-color="#8ccb86" stop-opacity=".1"/></linearGradient>
        </defs>
        <path d="M200 57Q115 136 0 177V212Q120 165 200 96Z" fill="url(#r1)"/>
        <path d="M200 60Q112 142 0 184M200 68Q112 150 0 192M200 78Q112 158 0 201" fill="none" stroke="#438d86" stroke-opacity=".2" stroke-width="2"/>
        <path d="M200 100Q155 140 122 190T8 350H52Q125 240 200 125Z" fill="url(#r4)"/>
        <path d="M139 171Q72 240 0 260V280Q78 250 106 206Z" fill="url(#r2)"/>
        <path d="M132 178Q72 244 0 266M126 184Q74 250 0 272" fill="none" stroke="#bfe6b8" stroke-opacity=".4"/>
        <path d="M108 205Q80 250 4 322L36 314Q68 270 112 204Z" fill="url(#r3)"/>
        <path d="M98 216Q70 260 26 312M104 212Q72 268 38 312" fill="none" stroke="#b8e4b4" stroke-opacity=".35" stroke-width="3"/>
        <path d="M145 163L120 188M129 168L121 186" stroke="#8bd080" stroke-opacity=".6" stroke-width="2"/>
      </svg>
      <a class="home" href="#">Control Panel Home</a>
      <a class="current" href="#">Classic View</a>
    </nav>
    <main class="content">
      <div class="columns">
        <button class="col sorted">Name</button>
        <button class="col">Category</button>
      </div>
      <ul class="grid">
        <li><a href="#"><svg><use href="#i-hardware"/></svg>Add<br>Hardware</a></li>
        <li><a href="#"><svg><use href="#i-tools"/></svg>Administrat...<br>Tools</a></li>
        <li><a href="#"><svg><use href="#i-audio"/></svg>Audio<br>Devices a...</a></li>
        <li><a href="#"><svg><use href="#i-autoplay"/></svg>AutoPlay</a></li>
        <li><a href="#"><svg><use href="#i-backup"/></svg>Backup and<br>Restore</a></li>
        <li><a href="#"><svg><use href="#i-bitlocker"/></svg>BitLocker<br>Drive En...</a></li>
        <li><a href="#"><svg><use href="#i-color"/></svg>Color<br>Management</a></li>
        <li><a href="#"><svg><use href="#i-date"/></svg>Date and<br>Time</a></li>
        <li><a href="#"><svg><use href="#i-default"/></svg>Default<br>Programs</a></li>
        <li><a href="#"><svg><use href="#i-device"/></svg>Device<br>Manager</a></li>
        <li><a href="#"><svg><use href="#i-ease"/></svg>Ease of<br>Acce...</a></li>
        <li><a href="#"><svg><use href="#i-folderopt"/></svg>Folder<br>Options</a></li>
        <li><a href="#"><svg><use href="#i-fonts"/></svg>Fonts</a></li>
        <li><a href="#"><svg><use href="#i-game"/></svg>Game<br>Controllers</a></li>
        <li><a href="#"><svg><use href="#i-index"/></svg>Indexing<br>Options</a></li>
        <li><a href="#"><svg><use href="#i-internet"/></svg>Internet<br>Options</a></li>
        <li><a href="#"><svg><use href="#i-iscsi"/></svg>iSCSI Initiator</a></li>
        <li><a href="#" class="selected"><svg><use href="#i-keyboard"/></svg>Keyboard</a></li>
        <li><a href="#"><svg><use href="#i-mouse"/></svg>Mouse</a></li>
        <li><a href="#"><svg><use href="#i-netcenter"/></svg>Network<br>Center</a></li>
        <li><a href="#"><svg><use href="#i-netfile"/></svg>Network File<br>and Printe...</a></li>
        <li><a href="#"><svg><use href="#i-netlist"/></svg>Network List</a></li>
        <li class="past-dialog"><a href="#"><svg><use href="#i-perf"/></svg>Performance<br>Rating and...</a></li>
        <li><a href="#"><svg><use href="#i-personal"/></svg>Personaliz...</a></li>
        <li><a href="#"><svg><use href="#i-phone"/></svg>Phone and<br>Modem ...</a></li>
        <li><a href="#"><svg><use href="#i-power"/></svg>Power<br>Options</a></li>
        <li><a href="#"><svg><use href="#i-print"/></svg>Printers</a></li>
        <li><a href="#"><svg><use href="#i-problem"/></svg>Problem<br>Reports a...</a></li>
        <li><a href="#"><svg><use href="#i-programs"/></svg>Programs</a></li>
        <li><a href="#"><svg><use href="#i-region"/></svg>Regional and<br>Language ...</a></li>
        <li><a href="#"><svg><use href="#i-scanner"/></svg>Scanners and<br>Cameras</a></li>
        <li><a href="#"><svg><use href="#i-security"/></svg>Security<br>Center</a></li>
        <li><a href="#"><svg><use href="#i-speech"/></svg>Speech<br>Recognition</a></li>
        <li><a href="#"><svg><use href="#i-sync"/></svg>Sync Center</a></li>
        <li><a href="#"><svg><use href="#i-system"/></svg>System</a></li>
        <li><a href="#"><svg><use href="#i-tablet"/></svg>Tablet PC<br>Settings</a></li>
        <li><a href="#"><svg><use href="#i-taskbar"/></svg>Taskbar and<br>Start Menu</a></li>
        <li><a href="#"><svg><use href="#i-text"/></svg>Text to<br>Speech</a></li>
        <li><a href="#"><svg><use href="#i-users"/></svg>User<br>Accounts</a></li>
        <li class="past-dialog"><a href="#"><svg><use href="#i-update"/></svg>Windows<br>Update</a></li>
      </ul>
    </main>
  </div>

  <footer class="taskbar">
    <button class="start" aria-label="Start"><svg width="42" height="42" viewBox="0 0 42 42"><circle cx="21" cy="21" r="20" fill="url(#orb)" stroke="#1a2c40" stroke-width="1.500"/><path d="M3 19Q5 2 21 2T39 19Q21 25 3 19Z" fill="#dfe8f0" opacity=".5"/><use href="#flag" x="7" y="6" width="28" height="27"/></svg></button>
    <button class="quick" aria-label="Internet Explorer"><svg width="16" height="16" viewBox="0 0 16 16"><rect x="1" y="1" width="12" height="14" rx="1" fill="#e9f3fc"/><path d="M11 10Q9 13 6 12Q3 10 4 7Q6 3 10 5L10 8H5M2 12Q0 15 5 13M9 3Q14 0 13 4" fill="none" stroke="#1b7ad0" stroke-width="2"/><circle cx="14" cy="7" r="1.500" fill="#d8502c"/></svg></button>
    <div class="tasks">
      <button class="task"><svg width="16" height="18"><use href="#cpanel"/></svg>Control Panel</button>
      <button class="task active"><svg width="16" height="16"><use href="#keyb-small"/></svg>Keyboard Properties</button>
    </div>
    <div class="tray">
      <svg width="14" height="16" viewBox="0 0 14 16"><path d="M7 1Q10 3 13 3Q14 11 7 15Q0 11 1 3Q4 3 7 1Z" fill="#cc2a2c" stroke="#f0b0b0"/><path d="M4 5L10 11M10 5L4 11" stroke="#fff" stroke-width="2"/></svg>
      <svg width="16" height="16" viewBox="0 0 16 16"><path d="M1 1H7V6H1ZM3 6V12H6" fill="#aaa" stroke="#666"/><circle cx="11" cy="11" r="5" fill="#28a028"/><path d="M8 11L10 13L14 8" fill="none" stroke="#fff" stroke-width="1.500"/></svg>
      <svg class="gap" width="16" height="14" viewBox="0 0 16 14"><rect x="1" y="1" width="14" height="12" fill="#1a2cc8" stroke="#c8d0f0"/><path d="M8 2L4 12H1V2Z" fill="#3c58f0"/><path d="M12 2V12" stroke="#101840" stroke-width="3" stroke-dasharray="2 1"/></svg>
      <svg width="16" height="16" viewBox="0 0 16 16"><rect x="5" y="1" width="10" height="8" fill="#3a9ae0" stroke="#e6f0fa"/><rect x="1" y="5" width="9" height="7" fill="#1e6cb8" stroke="#e6f0fa"/><path d="M3 14H9" stroke="#fff" stroke-width="2"/></svg>
      <svg width="16" height="16" viewBox="0 0 16 16"><path d="M1 6H4L8 2V14L4 10H1Z" fill="#fff"/><path d="M10 5Q12 8 10 11M12 3Q16 8 12 13" fill="none" stroke="#b6e0c4" stroke-width="1.500"/></svg>
      <time>9:32 AM</time>
    </div>
  </footer>

  <div class="watermark">
    <svg width="50" height="30" viewBox="0 0 50 30"><path d="M21 1L47 2L29 20L4 13Z" fill="#b4b6b8" opacity=".85"/><path d="M4 11Q-1 17 4 19L28 26L48 4" fill="none" stroke="#d6d8da" stroke-width="4" opacity=".85"/><path d="M5 14L29 21L46 4" fill="none" stroke="#2a2c2e" stroke-width="1.500"/></svg>
    <span>The Collection Book</span>
  </div>

  <section class="dialog" role="dialog" aria-labelledby="dlg-title">
    <div class="dlg-title">
      <svg width="16" height="16"><use href="#keyb-small"/></svg>
      <h1 id="dlg-title">Keyboard Properties</h1>
      <button class="close" aria-label="Close dialog"><svg width="12" height="11"><path d="M2 1.500L10 9.500M10 1.500L2 9.500" stroke="#734" stroke-width="4"/><path d="M2 1.500L10 9.500M10 1.500L2 9.500" stroke="#fff" stroke-width="2.500"/></svg></button>
    </div>
    <form class="client">
      <div class="tabs" role="tablist">
        <button type="button" class="tab on" role="tab" aria-selected="true">Speed</button>
        <button type="button" class="tab" role="tab" aria-selected="false">Hardware</button>
      </div>
      <div class="panel">
        <fieldset class="repeat">
          <legend>Character repeat</legend>
          <div class="setting">
            <svg width="32" height="32" viewBox="0 0 32 32" aria-hidden="true"><text x="11" y="31" class="glyph" font-size="26" fill="#0a1478">A</text><path d="M8 1H13M10 1V4M2 5L4 3M19 5L17 3" stroke="#222" stroke-width="2"/><circle cx="10.500" cy="13" r="8" fill="#fff" stroke="#c8181e" stroke-width="3.500"/><circle cx="10.500" cy="13" r="9.800" fill="none" stroke="#400" stroke-width=".7"/><path d="M10.500 9V15" stroke="#33b" stroke-width="1.500"/></svg>
            <div class="control">
              <label for="delay">Repeat delay:</label>
              <div class="range"><span>Long</span>
                <div class="slider"><input type="range" id="delay" min="0" max="3" value="2"><div class="ticks"><i></i><i></i><i></i><i></i></div></div>
                <span>Short</span></div>
            </div>
          </div>
          <div class="setting">
            <svg width="32" height="32" viewBox="0 0 32 32" aria-hidden="true"><text x="0" y="24" class="glyph" font-size="25" fill="#b8b8b8" stroke="#555" stroke-width=".8">A</text><text x="14" y="24" class="glyph" font-size="25" fill="#f5ec18" stroke="#222" stroke-width=".8">A</text></svg>
            <div class="control">
              <label for="rate">Repeat rate:</label>
              <div class="range"><span>Slow</span>
                <div class="slider"><input type="range" id="rate" min="0" max="31" value="31"><div class="ticks"><i></i><i></i><i></i><i></i><i></i><i></i><i></i><i></i><i></i><i></i><i></i><i></i><i></i><i></i><i></i><i></i><i></i><i></i><i></i><i></i><i></i><i></i><i></i><i></i><i></i><i></i><i></i><i></i><i></i><i></i><i></i></div></div>
                <span>Fast</span></div>
            </div>
          </div>
          <div class="test">
            <label for="test">Click here and hold down a key to test repeat rate:</label>
            <input type="text" id="test">
          </div>
        </fieldset>
        <fieldset class="blink">
          <legend>Cursor blink rate</legend>
          <div class="range"><label for="blink">None</label>
            <div class="slider"><input type="range" id="blink" min="0" max="11" value="7"><div class="ticks"><i></i><i></i><i></i><i></i><i></i><i></i><i></i><i></i><i></i><i></i><i></i><i></i></div></div>
            <span>Fast</span></div>
        </fieldset>
      </div>
      <div class="actions">
        <button type="button" class="btn default">OK</button>
        <button type="button" class="btn">Cancel</button>
        <button type="button" class="btn" disabled>Apply</button>
      </div>
    </form>
  </section>
</div>
</body>
</html>
```
FILE: styles.css
```css
* { box-sizing: border-box; }
html, body { height: 100%; margin: 0; }
body { font-family: "Noto Sans", sans-serif; font-size: 11px; color: #111; overflow: hidden; }
button { font: inherit; color: inherit; border: 0; background: none; padding: 0; }
a { color: inherit; text-decoration: none; }
svg { display: block; flex: none; }
.defs { position: absolute; }
.glyph { font-family: "Liberation Serif", serif; font-weight: bold; }

.desktop { min-height: 100vh; display: flex; flex-direction: column; position: relative; background: #3a4347; }

.titlebar { height: 22px; display: flex; justify-content: flex-end; padding-right: 3px; border-top: 1px solid #000; box-shadow: inset 0 1px #8d9397; }
.win-buttons { display: flex; height: 17px; border: 1px solid #b4b9bc; border-top: 0; border-radius: 0 0 4px 4px; }
.win-buttons button { width: 25px; display: flex; align-items: center; justify-content: center; }
.win-buttons button + button { border-left: 1px solid #a0a6aa; }
.win-buttons .wide { width: 42px; }

.navbar { height: 33px; display: flex; align-items: flex-start; padding: 0 1px 0 0; border-bottom: 1px solid #10171a; box-shadow: inset 0 -1px #8d9397; }
.nav-buttons { display: flex; width: 70px; gap: 3px; align-items: center; }
.nav { width: 26px; }
.nav-buttons .small { width: 10px; }
.address, .search { display: flex; align-items: center; height: 24px; background: #c5c7ca; border: 1px solid #6e7679; box-shadow: inset 0 0 0 1px #e9ebec; }
.address { flex: 1; padding-left: 7px; gap: 11px; margin-right: 6px; }
.drop { margin-left: auto; height: 22px; width: 14px; display: flex; align-items: center; justify-content: center; }
.refresh { height: 22px; width: 26px; border-left: 1px solid #555c60; display: flex; align-items: center; justify-content: center; }
.search { width: 184px; padding: 0 4px 0 6px; gap: 10px; }
.search input { flex: 1; min-width: 0; border: 0; background: none; outline: 0; padding: 0; font: italic 11px "Noto Sans", sans-serif; color: #333; }
.search input::placeholder { color: #666; opacity: 1; }

.body { flex: 1; display: flex; }
.sidebar { width: 200px; position: relative; padding: 14px 20px; color: #fff; background: linear-gradient(#416ea9, #44779f 12%, #4f8d91 45%, #5da384 68%, #66af78 85%, #6bba6b); }
.sidebar a { display: block; position: relative; }
.ribbons { position: absolute; left: 0; bottom: 0; width: 200px; height: 350px; }
.home { line-height: 18px; color: #e3edf7; }
.current { margin-top: 7px; font-size: 15px; line-height: 22px; font-weight: bold; }
.current::before { content: ""; position: absolute; left: -13px; top: 8px; width: 6px; height: 6px; border-radius: 50%; background: #fff; }

.content { flex: 1; background: #fcfcfc; }
.columns { height: 23px; display: flex; background: linear-gradient(#fff 40%, #f1f2f4 41%); border-bottom: 1px solid #d3dbe1; }
.col { width: 82px; text-align: left; padding-left: 6px; line-height: 24px; border-right: 1px solid #dfe3e6; color: #222; }
.sorted { width: 66px; position: relative; background: linear-gradient(#eef9fe 40%, #d5effc 41%); border-color: #96d3f0; }
.sorted::before { content: ""; position: absolute; left: 30px; top: 2px; border: 3px solid transparent; border-top: 0; border-bottom-color: #6c8ea0; }
.grid { list-style: none; margin: 0; padding: 1px 0 0 5px; display: grid; grid-template-columns: repeat(auto-fill, 75px); grid-auto-rows: 98px; }
.grid a { display: block; height: 70px; padding-top: 1px; text-align: center; white-space: nowrap; line-height: 15px; color: #555; border: 1px solid transparent; border-radius: 2px; }
.grid svg { width: 48px; height: 48px; margin: 0 auto 3px; }
.grid .selected { background: linear-gradient(#e6f5fd, #c4e6f9); border-color: #b0dcf4; }
.past-dialog { grid-column-start: 6; }

.taskbar { height: 30px; display: flex; align-items: center; color: #fff; background: linear-gradient(#8a8e8e 0, #6a6d6d 2px, #3d3f40 45%, #0c0e0f 50%, #000 100%); }
.start { width: 42px; height: 30px; margin-left: 10px; position: relative; }
.start svg { position: absolute; top: -4px; left: 0; }
.quick { margin-left: 12px; }
.tasks { margin-left: 81px; display: flex; gap: 3px; }
.task { height: 27px; width: 157px; display: flex; align-items: center; gap: 5px; padding: 0 8px; border: 1px solid #777b7c; border-radius: 3px; background: linear-gradient(#77797a, #4b4d4e 48%, #1b1d1e 50%, #2c2f30); white-space: nowrap; }
.task.active { width: 153px; background: linear-gradient(#303233, #161718 48%, #000 50%, #0d0f10); border-color: #55585a; }
.tray { margin-left: auto; display: flex; align-items: center; gap: 3px; padding-right: 16px; }
.tray .gap { margin-right: 8px; }
.tray time { margin-left: 6px; font-size: 12px; }

.watermark { position: absolute; right: 23px; bottom: 1px; display: flex; align-items: flex-start; gap: 10px; pointer-events: none; }
.watermark span { font-size: 18px; line-height: 12px; color: #fff; opacity: .35; }

.dialog { position: absolute; left: 160px; top: 130px; width: 414px; height: 459px; padding: 0 6px 6px; border: 1px solid #2c4446; border-radius: 6px; background: linear-gradient(rgba(230,232,234,.75), rgba(222,226,228,.7) 28%, rgba(160,205,205,.6) 30%, rgba(196,222,220,.6)); backdrop-filter: blur(4px); box-shadow: inset 0 0 0 1px rgba(255,255,255,.6), inset -2px -2px #6ccfd0, 4px 5px 12px 2px rgba(0,0,0,.65); }
.dlg-title { height: 26px; display: flex; align-items: center; gap: 6px; }
.dlg-title h1 { margin: 0; flex: 1; font-size: 11px; font-weight: normal; line-height: 18px; }
.close { align-self: flex-start; width: 42px; height: 17px; display: flex; align-items: center; justify-content: center; border: 1px solid #5a2220; border-top: 0; border-radius: 0 0 4px 4px; background: linear-gradient(#eab0a4, #d8715c 45%, #c03418 50%, #dd6844); box-shadow: inset 0 0 0 1px rgba(255,255,255,.4); }
.client { height: 426px; padding: 7px 7px 9px 6px; border: 1px solid #444c4e; background: #f3f3f3; font-family: "Liberation Sans", sans-serif; font-size: 11px; line-height: 14px; color: #111; display: flex; flex-direction: column; }
.tabs { display: flex; align-items: flex-end; height: 20px; }
.tab { height: 18px; width: 57px; border: 1px solid #8c8e91; border-left: 0; border-bottom: 0; background: linear-gradient(#f2f2f2 50%, #d4d4d4); }
.tab.on { height: 21px; width: 47px; border-left: 1px solid #8c8e91; background: #fff; margin-bottom: -1px; position: relative; }
.panel { flex: 1; border: 1px solid #8c8e91; background: #fff; padding: 12px 13px 0 15px; }
fieldset { margin: 0; padding: 0 19px; border: 1px solid #d5dfe5; border-radius: 3px; }
legend { margin-left: -14px; padding: 0 2px; line-height: 14px; }
.repeat { height: 236px; }
.blink { height: 80px; margin-top: 8px; }
.blink .range { padding: 18px 0 0 52px; }
.setting { display: flex; gap: 20px; height: 75px; padding-top: 14px; }
.control { flex: 1; }
.control label { display: block; line-height: 14px; }
.range { display: flex; align-items: flex-start; }
.control .range { margin-top: 9px; }
.range > :first-child { width: 37px; }
.range > :last-child { margin-left: 10px; }
.slider { width: 184px; }
.slider input { appearance: none; display: block; width: 100%; height: 18px; margin: 4px 0 0; background: none; }
.slider input::-webkit-slider-runnable-track { height: 4px; border: 1px solid #b4b4b4; border-bottom-color: #e5e5e5; background: #e9e9e9; }
.slider input::-webkit-slider-thumb { appearance: none; width: 10px; height: 18px; margin-top: -8px; border: 0; background: linear-gradient(#fff, #d6d6d6); clip-path: polygon(0 0, 100% 0, 100% 72%, 50% 100%, 0 72%); box-shadow: inset 0 0 0 1px #888; }
.ticks { display: flex; justify-content: space-between; margin: 3px 5px 0 4px; }
.ticks i { width: 1px; height: 4px; background: #bbb; }
.test { padding-top: 12px; display: flex; flex-direction: column; gap: 2px; }
.test input { height: 23px; border: 1px solid #e0e3e7; border-top-color: #abadb3; border-radius: 2px; background: #fff; }
.actions { display: flex; justify-content: flex-end; gap: 8px; margin-top: 7px; }
.btn { width: 73px; height: 21px; border: 1px solid #808080; border-radius: 3px; background: linear-gradient(#f3f3f3, #ebebeb 48%, #dcdcdc 50%, #cfcfcf); box-shadow: inset 0 0 0 1px #fafafa; }
.default { border-color: #3c7f98; box-shadow: inset 0 0 0 1px #4ccbe8; }
.btn:disabled { color: #888; background: #f4f4f4; border-color: #b5b5b5; }
```
